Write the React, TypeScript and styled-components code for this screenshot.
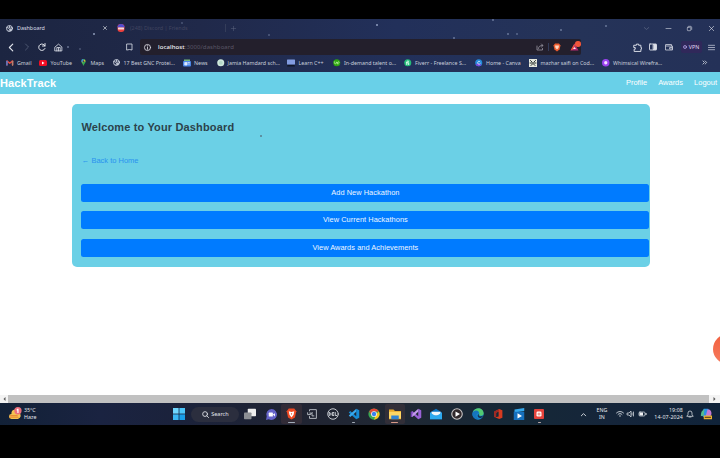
import React from "react";
import styled, { createGlobalStyle } from "styled-components";

const GlobalStyle = createGlobalStyle`
  * { box-sizing: border-box; }
  html, body { margin: 0; background: #000; overflow: hidden; }
  svg { display: block; flex: none; overflow: visible; }
`;

const Screen = styled.div`
  width: 720px;
  height: 458px;
  display: flex;
  flex-direction: column;
  padding: 19px 0 33px;
  overflow: hidden;
  background: #000;
  font-family: "Noto Sans", "Open Sans", sans-serif;
`;

const star = (x: number, y: number, a = 0.5) =>
  `radial-gradient(circle at ${x}px ${y}px, rgba(190,205,235,${a}) 0.5px, transparent 1.1px)`;

const Chrome = styled.header`
  height: 52.5px;
  flex: none;
  display: flex;
  flex-direction: column;
  color: #c9cedb;
  background: ${[
    star(94, 15, 0.8), star(68, 28, 0.5), star(80, 30, 0.3), star(182, 4, 0.3), star(269, 16, 0.35),
    star(377, 6, 0.8), star(454, 19, 0.5), star(493, 1, 0.5), star(508, 15, 0.5),
    star(517, 15, 0.4), star(561, 11, 0.5), star(606, 7, 0.5), star(380, 49, 0.4),
  ].join(",")}, linear-gradient(90deg, #1c2541 0%, #20294a 28%, #22305a 55%, #253358 80%, #243158 100%);
`;

const TabStrip = styled.div`
  height: 20px;
  padding-bottom: 2px;
  display: grid;
  grid-template-columns: 6px 11px 85px 15px 13px 95px 6px 403px 1fr;
  align-items: center;
  font-size: 5.4px;
`;

const TabTitle = styled.span<{ $dim?: boolean }>`
  color: ${(p) => (p.$dim ? "#414560" : "#d9dce6")};
  white-space: nowrap;
  line-height: 8px;
`;

const Divider = styled.span`
  width: 1px;
  height: 8px;
  background: #343d5a;
`;

const WindowControls = styled.div`
  display: grid;
  grid-template-columns: repeat(4, 21.5px);
  justify-items: center;
  margin-left: 2px;
`;

const Toolbar = styled.div`
  height: 16px;
  display: grid;
  grid-template-columns: 6px 16px 16px 16px 71px 15px 441px 1fr;
  align-items: center;
`;

const AddressBar = styled.div`
  height: 16px;
  display: grid;
  grid-template-columns: 4px 14px 378px 12px 5px 17px 1fr;
  align-items: center;
  border-radius: 2px;
  background: #231f2c;
  color: #5a5666;
  font-size: 6px;
  line-height: 9px;
`;

const Url = styled.span`
  letter-spacing: 0.09px;
  white-space: nowrap;
  b { color: #f1f1f4; font-weight: 500; }
`;

const AlertIcon = styled.span`
  position: relative;
  width: 9px;
  &::after {
    content: "";
    position: absolute;
    right: -1.5px;
    top: -2px;
    width: 5.5px;
    height: 5.5px;
    border-radius: 50%;
    background: #f0563c;
  }
`;

const ToolActions = styled.div`
  display: grid;
  grid-template-columns: 15.5px 16px 16px 27px 1fr;
  align-items: center;
  padding-left: 52px;
`;

const Vpn = styled.span`
  display: flex;
  align-items: center;
  justify-content: center;
  gap: 2px;
  width: 21px;
  height: 12px;
  border-radius: 2px;
  background: #30285a;
  color: #e2d9f5;
  font-size: 5.3px;
`;

const Bookmarks = styled.nav`
  height: 15px;
  padding: 0 0 0 6px;
  display: grid;
  grid-template-columns: 33px 41px 33px 69.5px 34px 70.5px 46px 71px 71px 54px 73px 99.5px 1fr;
  align-items: center;
  font-size: 5.3px;
`;

const Bookmark = styled.span`
  display: flex;
  align-items: center;
  gap: 3.5px;
  white-space: nowrap;
  line-height: 8px;
`;

const SiteNav = styled.nav`
  height: 22.5px;
  flex: none;
  display: flex;
  align-items: center;
  justify-content: space-between;
  padding-right: 3px;
  background: #69d0e8;
  color: #fff;
  font-family: "Liberation Sans", Arial, sans-serif;
`;

const Brand = styled.strong`
  font-size: 11px;
  letter-spacing: 0.12px;
`;

const Links = styled.div`
  display: flex;
  gap: 11px;
  font-size: 7.5px;
`;

const Page = styled.main`
  position: relative;
  flex: 1;
  padding: 9.5px 70px 0 72px;
  overflow: hidden;
  background: #fff;
  font-family: "Liberation Sans", Arial, sans-serif;
`;

const Card = styled.section`
  width: 577.5px;
  height: 163px;
  padding: 15px 0 0 9.4px;
  display: flex;
  flex-direction: column;
  border-radius: 5px;
  background: #6bd0e6;
`;

const Heading = styled.h2`
  margin: 0;
  height: 16px;
  line-height: 16px;
  font-size: 11px;
  letter-spacing: 0.15px;
  color: #2b434b;
`;

const BackLink = styled.a`
  margin: 20.5px 0 17.7px;
  height: 11px;
  line-height: 11px;
  display: flex;
  align-items: center;
  gap: 2.5px;
  font-size: 7.5px;
  color: #2a92ee;
`;

const Action = styled.button`
  flex: none;
  width: 568px;
  height: 18.2px;
  margin: 0 0 9.3px;
  padding: 0;
  border: 0;
  border-radius: 2.5px;
  background: #007bff;
  color: #eef7ff;
  font: 7.4px/18px "Liberation Sans", Arial, sans-serif;
  letter-spacing: 0.05px;
`;

const Fab = styled.div`
  position: absolute;
  left: 713px;
  top: 240px;
  width: 30px;
  height: 30px;
  border-radius: 50%;
  background: linear-gradient(#f2603f, #f67b5e);
`;

const Speck = styled.i`
  position: absolute;
  left: 260px;
  top: 41px;
  width: 2px;
  height: 2px;
  border-radius: 50%;
  background: #587b8b;
`;

const Scrollbar = styled.div`
  height: 8px;
  flex: none;
  display: grid;
  grid-template-columns: 8px 1fr 11px;
  align-items: stretch;
  background: #f3f3f3;
`;

const Thumb = styled.div`
  background: #c1c1c1;
`;

const Arrow = styled.svg`
  width: 3px;
  height: 4px;
  place-self: center;
  fill: #555;
`;

const Taskbar = styled.footer`
  height: 22px;
  flex: none;
  display: grid;
  grid-template-columns: 9px 159.5px 407.5px 1fr;
  align-items: center;
  background: linear-gradient(90deg, #122137 0%, #1a2341 14%, #1b223b 25%, #202432 42%, #202834 55%, #152837 72%, #15253a 85%, #102339 100%);
  color: #e4e7ec;
  font-size: 5.3px;
`;

const Weather = styled.div`
  display: flex;
  gap: 2px;
  align-items: center;
  line-height: 7.5px;
`;

const AppRow = styled.div`
  display: flex;
  align-items: center;
  height: 22px;
`;

const AppSlot = styled.span<{ $active?: boolean; $dot?: string }>`
  position: relative;
  flex: none;
  width: 20.65px;
  height: 20px;
  display: grid;
  place-items: center;
  border-radius: 2px;
  background: ${(p) => (p.$active ? "rgba(150,90,80,.16)" : "none")};
  &::after {
    content: "";
    position: absolute;
    bottom: 1px;
    left: calc(50% - ${(p) => (p.$active ? 3.5 : 1.5)}px);
    width: ${(p) => (p.$active ? 7 : 3)}px;
    height: 1.4px;
    border-radius: 1px;
    background: ${(p) => p.$dot ?? "transparent"};
  }
`;

const Search = styled.span`
  flex: none;
  width: 48px;
  height: 15px;
  margin: 0 1px 0 2px;
  display: flex;
  gap: 2.5px;
  align-items: center;
  justify-content: center;
  border-radius: 8px;
  background: #2b2e3e;
  font-size: 5.5px;
`;

const Tray = styled.div`
  display: grid;
  grid-template-columns: 14px 22px 10.5px 11px 10.5px 35px 3px 14px 1fr;
  align-items: center;
  padding-left: 4px;
`;

const Stack = styled.span<{ $align: "center" | "right" }>`
  text-align: ${(p) => p.$align};
  padding-right: ${(p) => (p.$align === "center" ? 6 : 0)}px;
  line-height: 7.4px;
  white-space: nowrap;
  letter-spacing: ${(p) => (p.$align === "right" ? 0.1 : 0)}px;
`;

type IconProps = { w?: number; h?: number; box?: string; children: React.ReactNode; stroke?: string; sw?: number };
const Icon = ({ w = 8, h = w, box = "0 0 16 16", stroke = "none", sw = 1.5, children }: IconProps) => (
  <svg width={w} height={h} viewBox={box} fill="none" stroke={stroke} strokeWidth={sw} strokeLinecap="round" strokeLinejoin="round">
    {children}
  </svg>
);

const Globe = ({ size = 7 }: { size?: number }) => (
  <Icon w={size}>
    <circle cx="8" cy="8" r="6.8" stroke="#d3d9e6" strokeWidth="2" />
    <path d="M2 6l4 1 2 3-1 4M9 2L7 5l3 2 4-1M10 10l3 0-2 3z" stroke="#d3d9e6" strokeWidth="2" />
  </Icon>
);

const bookmarks: { label: string; icon: React.ReactNode }[] = [
  { label: "Gmail", icon: <Icon w={7.5}><path d="M2 13V4l6 5 6-5v9" stroke="#e5493d" strokeWidth="3" /><path d="M2 13V5" stroke="#4c80d8" strokeWidth="3" /><path d="M14 13V5" stroke="#b08472" strokeWidth="3" /></Icon> },
  { label: "YouTube", icon: <Icon w={8}><rect x="0" y="2" width="16" height="12" rx="3" fill="#f20d24" /><path d="M6 5l5 3-5 3z" fill="#fff" /></Icon> },
  { label: "Maps", icon: <Icon w={7}><path d="M8 16C7 11 3 9 3 5a5 5 0 0110 0c0 4-4 6-5 11z" fill="#35a852" /><path d="M3 5a5 5 0 015-5l-3 8z" fill="#4285f4" /><path d="M4 8l6-7 3 4z" fill="#efbc2c" /><circle cx="8" cy="5" r="1.8" fill="#263557" /></Icon> },
  { label: "17 Best GNC Protei...", icon: <Globe /> },
  { label: "News", icon: <Icon w={8}><rect x="2" y="1" width="12" height="7" fill="#76b779" /><rect y="4" width="16" height="11" rx="2" fill="#4a86e8" /><path d="M4 7h4v5H4zM10 7h3M10 10h3" fill="#dce9ff" stroke="#dce9ff" /></Icon> },
  { label: "Jamia Hamdard sch...", icon: <Icon w={7.5}><circle cx="8" cy="8" r="7.5" fill="#cfe8dc" /><circle cx="8" cy="8" r="4" fill="#b3d7c7" /></Icon> },
  { label: "Learn C++", icon: <Icon w={8}><rect y="1" width="16" height="10" rx="1" fill="#829be0" /><path d="M1 12h14l1 3H0z" fill="#101628" /></Icon> },
  { label: "In-demand talent o...", icon: <Icon w={7.5}><circle cx="8" cy="8" r="7.5" fill="#2da50f" /><path d="M3 6v2c0 3 4 3 4 0V6l3 5M9 9c0-4 5-4 4-1-1 2-4 1-4 0" stroke="#b8ef9e" /></Icon> },
  { label: "Fiverr - Freelance S...", icon: <Icon w={7.5}><circle cx="8" cy="8" r="7.5" fill="#24bd78" /><path d="M6 12V7c0-3 2-3 4-2M5 8h5v4" stroke="#e6fff4" strokeWidth="2" /></Icon> },
  { label: "Home - Canva", icon: <Icon w={7.5}><circle cx="8" cy="8" r="7.5" fill="#248bdc" /><path d="M1 11a7.5 7.5 0 0013 1L8 9z" fill="#7548dc" /><path d="M10.5 6C9 3 5 6 6 9s3 3 5 1" stroke="#fff" strokeWidth="1.6" /></Icon> },
  { label: "mazhar saifi on Cod...", icon: <Icon w={8}><rect width="16" height="16" fill="#e7e9de" /><path d="M3 3l3 3M13 3l-3 3M2 8h12M4 13l3-3M12 13l-3-3" stroke="#29302e" strokeWidth="2" /></Icon> },
  { label: "Whimsical Wirefra...", icon: <Icon w={7.5}><circle cx="8" cy="8" r="8" fill="#9a42ef" /><circle cx="8" cy="8" r="3.5" fill="#f3dfff" /></Icon> },
];

const apps: { icon: React.ReactNode; active?: boolean; dot?: string }[] = [
  { icon: <Icon w={12}><rect x="5" y="1" width="11" height="10" rx="1" fill="#eee" /><rect y="6" width="10" height="9" rx="1" fill="#8c8f94" /></Icon> },
  { icon: <Icon w={11}><path d="M8 0a8 8 0 11-4 15l-4 1 1-5A8 8 0 018 0z" fill="#6563c8" /><rect x="4" y="5" width="6" height="6" rx="1" fill="#fff" /><path d="M10 8l3-2v5z" fill="#fff" /></Icon> },
  { active: true, dot: "#a2adba", icon: <Icon w={11} h={12}><path d="M4 0h8l3 4-2 9-5 3-5-3L1 4z" fill="#ef4b24" /><path d="M4 4l4 1 4-1-1 5-3 4-3-4z" fill="#fff" /><path d="M7 7h2l-1 3z" fill="#ef4b24" /></Icon> },
  { icon: <Icon w={10} h={12} stroke="#b9bec5" sw={1.5}><path d="M4 3V1h11v14H4v-3M1 6v3h4V6M5 9l3-3M8 6v5h3" /></Icon> },
  { icon: <Icon w={12} stroke="#c8cdd3" sw={1.3}><circle cx="8" cy="8" r="7" /><path d="M3 6v4c3 0 3-4 0-4M9 6H7v4h2M7 8h2M11 6v4h2" /></Icon> },
  { dot: "#a4adb8", icon: <Icon w={12}><path d="M11 1l4 2v10l-4 2L1 6l2-2 8 7z" fill="#178bd4" /><path d="M11 1L1 10l2 2 8-7z" fill="#39a9ee" /></Icon> },
  { icon: <Icon w={12}><circle cx="8" cy="8" r="7.5" fill="#38a852" /><path d="M1.500 4.500a7.500 7.500 0 0113 0L8 5z" fill="#e94335" /><path d="M14.500 4.500A7.500 7.500 0 018 15.500L11 8z" fill="#f8c51c" /><path d="M1.500 4.500L5 10l3-5z" fill="#e94335" /><circle cx="8" cy="8" r="3.8" fill="#fff" /><circle cx="8" cy="8" r="2.9" fill="#3981ee" /></Icon> },
  { active: true, dot: "#d89a89", icon: <Icon w={12}><path d="M0 2h6l2 2h8v11H0z" fill="#e9a928" /><path d="M0 5h16v9H0z" fill="#ffd764" /><path d="M3 10h10v5H3z" fill="#3484d2" /></Icon> },
  { icon: <Icon w={12}><path d="M11 1l4 2v10l-4 2L1 6l2-2 8 7z" fill="#9a62d7" /><path d="M11 1L1 10l2 2 8-7z" fill="#c29aea" /><path d="M1 5h2v7H1z" fill="#7541b5" /></Icon> },
  { icon: <Icon w={12}><path d="M0 6l8-5 8 5v9H0z" fill="#0874c5" /><path d="M2 5h12v5H2z" fill="#f1f6fb" /><path d="M0 6l8 5 8-5v9H0z" fill="#2ca9ef" /></Icon> },
  { icon: <Icon w={12}><circle cx="8" cy="8" r="7" fill="#30282b" stroke="#c9c5c5" /><path d="M6 4.500l6 3.500-6 3.500z" fill="#fff" /></Icon> },
  { icon: <Icon w={12}><circle cx="8" cy="8" r="7.5" fill="#1687cc" /><path d="M1 6c3-8 14-7 14.500 1 0 4-5 4-6 2 2-4-4-6-8.500-3z" fill="#52cb72" /><path d="M1 6c3-4 9-3 8 1-4-1-5 5 1 8C4 16-1 11 1 6z" fill="#1675bd" /><path d="M9 8c-1 3 3 4 6 2-1 3-5 5-7 2-1-2 0-4 1-4z" fill="#153453" /></Icon> },
  { icon: <Icon w={10} h={12}><path d="M10 0l5 2v12l-5 2-7-3 6-1V4L5 6v6l-3 1V4z" fill="#d63b20" /><path d="M10 0L2 4v9l3-1V6l4-2z" fill="#9e2925" /></Icon> },
  { icon: <Icon w={12}><path d="M2 2l13-2v4L2 6z" fill="#36a9ed" /><path d="M1 5h14v11H1z" fill="#1670bd" /><path d="M6 7l6 3.500L6 14z" fill="#fff" /></Icon> },
  { dot: "#b9a8a8", icon: <Icon w={10}><rect width="16" height="16" rx="1.5" fill="#e4423b" /><rect x="4" y="4" width="8" height="8" rx="2" fill="#fff" /><circle cx="8" cy="8" r="2.5" fill="#ef9b91" /></Icon> },
];

export default function App() {
  return (
    <>
      <GlobalStyle />
      <Screen>
        <Chrome>
          <TabStrip>
            <span />
            <Globe />
            <TabTitle>Dashboard</TabTitle>
            <Icon w={4} box="-4 0 16 16" stroke="#c4c8d2" sw={3}><path d="M2 2l12 12M14 2L2 14" /></Icon>
            <Icon w={8}><rect x="1" y="0" width="14" height="16" rx="6" fill="#ea403d" /><path d="M1 7a7 7 0 0114 0" fill="#514cd0" /><rect x="2" y="7" width="12" height="4" rx="1" fill="#f5dada" /></Icon>
            <TabTitle $dim>(248) Discord | Friends</TabTitle>
            <Divider />
            <Icon w={5} stroke="#606a83" sw={1.5}><path d="M8 1v14M1 8h14" /></Icon>
            <WindowControls>
              <Icon w={5} stroke="#66718d" sw={2}><path d="M1 5l7 6 7-6" /></Icon>
              <Icon w={5} stroke="#cdd2de" sw={2}><path d="M0 8h16" /></Icon>
              <Icon w={5} stroke="#cdd2de" sw={2}><rect x="1" y="4" width="11" height="11" rx="2" /><path d="M5 1h8l2 2v8" /></Icon>
              <Icon w={5} stroke="#dde1ea" sw={2}><path d="M1 1l14 14M15 1L1 15" /></Icon>
            </WindowControls>
          </TabStrip>
          <Toolbar>
            <span />
            <Icon w={9} stroke="#e2e5ec" sw={2}><path d="M12 2L6 8l6 6" /></Icon>
            <Icon w={8} stroke="#58627c" sw={1.6}><path d="M7 2l6 6-6 6" /></Icon>
            <Icon w={8} stroke="#e2e5ec" sw={2}><path d="M14 6A6.500 6.500 0 1014 11M14 1v5H9" /></Icon>
            <Icon w={9} stroke="#d5d9e3" sw={1.5}><path d="M2 7l6-5 6 5v7H2zM5 14V8h6v6M8 9v5" /></Icon>
            <Icon w={8} stroke="#d0d4df" sw={1.7}><path d="M4 2h10v12l-5-1-5 1z" /></Icon>
            <AddressBar>
              <span />
              <Icon w={7} stroke="#d7d5dd" sw={2}><circle cx="8" cy="8" r="7" /><path d="M8 7v5M8 4v.1" /></Icon>
              <Url><b>localhost</b>:3000/dashboard</Url>
              <Icon w={8} stroke="#9b98a3" sw={1.6}><path d="M2 6v8h11v-3M5 11c0-4 3-6 8-6M11 2l3 3-3 3" /></Icon>
              <Divider />
              <Icon w={8} h={9}><path d="M4 0h8l3 4-2 8-5 4-5-4L1 4z" fill="#ed5c2e" /><path d="M4 4h8l-1 5-3 3-3-3z" fill="#ffd7c2" /></Icon>
              <AlertIcon>
                <Icon w={9} h={8}><path d="M8 1L0 15h16z" fill="#b12c72" /><path d="M8 1L0 15l8-4z" fill="#f0523c" /><path d="M8 8l-3 4h6z" fill="#f6e4ee" /></Icon>
              </AlertIcon>
            </AddressBar>
            <ToolActions>
              <Icon w={9} stroke="#dce0e9" sw={1.7}><path d="M2 4h4V2h4v2h4v4h1v3h-1v4H2v-4h2V8H2z" /></Icon>
              <Icon w={8} stroke="#dce0e9" sw={1.8}><rect x="1" y="2" width="14" height="12" rx="1" /><path d="M9 3h5v10H9z" fill="#dce0e9" /></Icon>
              <Icon w={8} stroke="#c6cbd8" sw={1.7}><path d="M2 3h11v3M1 4v10h14V6H2M10 9h5v3h-5z" /></Icon>
              <Vpn><Icon w={4} stroke="#b6a6e8" sw={3}><circle cx="8" cy="8" r="6" /><path d="M8 8v.1" /></Icon>VPN</Vpn>
              <Icon w={7} stroke="#c6ccda" sw={1.7}><path d="M1 3h14M1 8h14M1 13h14" /></Icon>
            </ToolActions>
          </Toolbar>
          <Bookmarks>
            {bookmarks.map((b) => (
              <Bookmark key={b.label}>{b.icon}<span>{b.label}</span></Bookmark>
            ))}
            <Icon w={5} box="-2 0 16 16" stroke="#e1e5ee" sw={2.4}><path d="M1 3l5 5-5 5M8 3l5 5-5 5" /></Icon>
          </Bookmarks>
        </Chrome>
        <SiteNav>
          <Brand>HackTrack</Brand>
          <Links><span>Profile</span><span>Awards</span><span>Logout</span></Links>
        </SiteNav>
        <Page>
          <Card>
            <Heading>Welcome to Your Dashboard</Heading>
            <BackLink><span>←</span><span>Back to Home</span></BackLink>
            <Action>Add New Hackathon</Action>
            <Action>View Current Hackathons</Action>
            <Action>View Awards and Achievements</Action>
          </Card>
          <Speck />
          <Fab />
        </Page>
        <Scrollbar>
          <Arrow viewBox="0 0 3 4"><path d="M2.5 0L.5 2l2 2z" /></Arrow>
          <Thumb />
          <Arrow viewBox="0 0 3 4"><path d="M.5 0l2 2-2 2z" /></Arrow>
        </Scrollbar>
        <Taskbar>
          <span />
          <Weather>
            <Icon w={13} h={14}><path d="M3 14a3 3 0 010-6 5 5 0 0110-1 4 4 0 01-2 7z" fill="#f2c252" /><path d="M2 10h8M1 12h10" stroke="#e98d35" /><circle cx="11" cy="4" r="4.5" fill="#ec6f7b" /><path d="M10 3l1-1v4" stroke="#fff" /></Icon>
            <div>35°C<br />Haze</div>
          </Weather>
          <AppRow>
            <AppSlot>
              <Icon w={12}><path d="M0 0h7.500v7.500H0z" fill="#70d7ff" /><path d="M8.500 0H16v7.500H8.500z" fill="#4bc6fa" /><path d="M0 8.500h7.500V16H0z" fill="#3bb7f3" /><path d="M8.500 8.500H16V16H8.500z" fill="#199ee9" /></Icon>
            </AppSlot>
            <Search>
              <Icon w={7} stroke="#e0e2e8" sw={2}><circle cx="7" cy="7" r="5.5" /><path d="M11 11l4 4" /></Icon>
              Search
            </Search>
            {apps.map((a, i) => <AppSlot key={i} $active={a.active} $dot={a.dot}>{a.icon}</AppSlot>)}
          </AppRow>
          <Tray>
            <Icon w={7} stroke="#e3e7ed" sw={2}><path d="M3 11l5-5 5 5" /></Icon>
            <Stack $align="center">ENG<br />IN</Stack>
            <Icon w={8} stroke="#cfd6dc" sw={1.8}><path d="M1 6c4-4 10-4 14 0M4 9c2-2.500 6-2.500 8 0M7 12h2" /></Icon>
            <Icon w={8} stroke="#cfd6dc" sw={1.6}><path d="M1 6h3l4-4v12l-4-4H1zM10 6v4M13 4v8" /></Icon>
            <Icon w={9} h={8}><rect x="1" y="4" width="12" height="8" rx="2" stroke="#cfd6dc" strokeWidth="1.5" /><path d="M2 5h7v6H2zM14 6h2v4h-2z" fill="#f0f2f4" /></Icon>
            <Stack $align="right">19:08<br />14-07-2024</Stack>
            <span />
            <Icon w={8} stroke="#dde1e6" sw={1.5}><path d="M2 12l2-3V6a4 4 0 018 0v3l2 3zM6 14h4" /></Icon>
            <Icon w={12}><path d="M5 1h6l4 12H6L1 9z" fill="#2c91e8" /><path d="M10 2c4-1 6 3 5 7l-3 4H7z" fill="#c67bd3" /><path d="M2 5l4-4-1 9-4 1z" fill="#55bc8d" /><path d="M5 10h11v5H5z" fill="#eab335" /><path d="M7 12.500h7" stroke="#6d4d1c" /></Icon>
          </Tray>
        </Taskbar>
      </Screen>
    </>
  );
}
